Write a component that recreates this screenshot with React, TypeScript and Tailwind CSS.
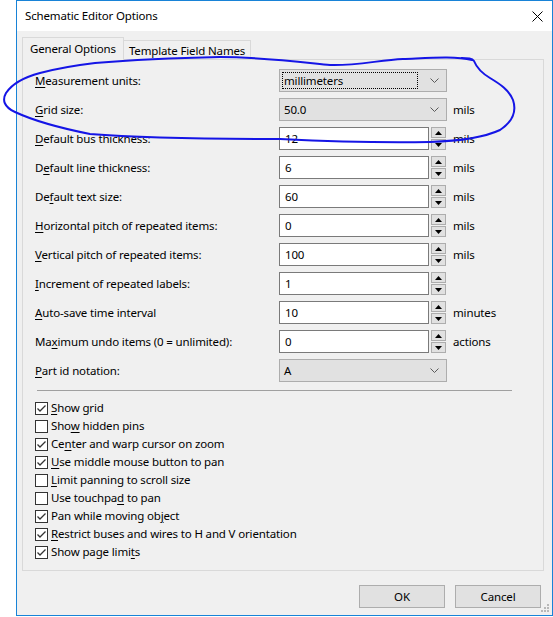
import React from 'react';

type Label = { pre: string; u: string; post: string };

type Row = {
  label: Label;
  kind: 'combo' | 'spin';
  value: string;
  unit?: string;
  focused?: boolean;
};

const rows: Row[] = [
  { label: { pre: '', u: 'M', post: 'easurement units:' }, kind: 'combo', value: 'millimeters', focused: true },
  { label: { pre: '', u: 'G', post: 'rid size:' }, kind: 'combo', value: '50.0', unit: 'mils' },
  { label: { pre: '', u: 'D', post: 'efault bus thickness:' }, kind: 'spin', value: '12', unit: 'mils' },
  { label: { pre: 'D', u: 'e', post: 'fault line thickness:' }, kind: 'spin', value: '6', unit: 'mils' },
  { label: { pre: 'De', u: 'f', post: 'ault text size:' }, kind: 'spin', value: '60', unit: 'mils' },
  { label: { pre: '', u: 'H', post: 'orizontal pitch of repeated items:' }, kind: 'spin', value: '0', unit: 'mils' },
  { label: { pre: '', u: 'V', post: 'ertical pitch of repeated items:' }, kind: 'spin', value: '100', unit: 'mils' },
  { label: { pre: '', u: 'I', post: 'ncrement of repeated labels:' }, kind: 'spin', value: '1' },
  { label: { pre: '', u: 'A', post: 'uto-save time interval' }, kind: 'spin', value: '10', unit: 'minutes' },
  { label: { pre: 'Ma', u: 'x', post: 'imum undo items (0 = unlimited):' }, kind: 'spin', value: '0', unit: 'actions' },
  { label: { pre: '', u: 'P', post: 'art id notation:' }, kind: 'combo', value: 'A' },
];

const checks: { label: Label; on: boolean }[] = [
  { label: { pre: '', u: 'S', post: 'how grid' }, on: true },
  { label: { pre: 'Sho', u: 'w', post: ' hidden pins' }, on: false },
  { label: { pre: 'Ce', u: 'n', post: 'ter and warp cursor on zoom' }, on: true },
  { label: { pre: '', u: 'U', post: 'se middle mouse button to pan' }, on: true },
  { label: { pre: '', u: 'L', post: 'imit panning to scroll size' }, on: false },
  { label: { pre: 'Use touchpa', u: 'd', post: ' to pan' }, on: false },
  { label: { pre: 'Pan while moving ob', u: 'j', post: 'ect' }, on: true },
  { label: { pre: '', u: 'R', post: 'estrict buses and wires to H and V orientation' }, on: true },
  { label: { pre: 'Show page limi', u: 't', post: 's' }, on: true },
];

function Mnemonic({ label }: { label: Label }) {
  return (
    <span className="whitespace-pre">
      {label.pre}
      <span className="underline underline-offset-2">{label.u}</span>
      {label.post}
    </span>
  );
}

function Chevron() {
  return (
    <svg width="9" height="5" viewBox="0 0 9 5" className="shrink-0">
      <polyline points="0.5,0.5 4.5,4.5 8.5,0.5" fill="none" stroke="#5a5a5a" strokeWidth="1" />
    </svg>
  );
}

function Combo({ value, focused }: { value: string; focused?: boolean }) {
  return (
    <div className="flex h-[23px] w-[168px] items-center border border-[#adadad] bg-[#e1e1e1] pr-[7px]">
      <div className="flex h-full flex-1 items-center p-[2px]">
        <div
          className={
            focused
              ? 'flex h-full flex-1 items-center border border-dotted border-black pl-[1px]'
              : 'flex h-full flex-1 items-center pl-[2px]'
          }
        >
          {value}
        </div>
      </div>
      <div className="ml-[10px]">
        <Chevron />
      </div>
    </div>
  );
}

function Arrow({ up }: { up?: boolean }) {
  return (
    <svg width="7" height="4" viewBox="0 0 7 4">
      <polygon points={up ? '0,4 7,4 3.5,0' : '0,0 7,0 3.5,4'} fill="#000" />
    </svg>
  );
}

function Spin({ value }: { value: string }) {
  return (
    <div className="flex h-[23px] w-[168px] items-stretch">
      <div className="flex w-[150px] items-center border border-[#7a7a7a] bg-white pl-[5px]">{value}</div>
      <div className="ml-[2px] flex w-[15px] flex-col gap-px">
        <div className="flex flex-1 items-center justify-center border border-[#adadad] bg-[#e1e1e1]">
          <Arrow up />
        </div>
        <div className="flex flex-1 items-center justify-center border border-[#adadad] bg-[#e1e1e1]">
          <Arrow />
        </div>
      </div>
    </div>
  );
}

function CheckBox({ on }: { on: boolean }) {
  return (
    <div className="flex h-[13px] w-[13px] items-center justify-center border border-[#333333] bg-white">
      {on && (
        <svg width="11" height="11" viewBox="0 0 11 11">
          <polyline points="1.5,5.5 4,8 9.5,2.5" fill="none" stroke="#333333" strokeWidth="1.3" />
        </svg>
      )}
    </div>
  );
}

export default function App() {
  return (
    <div className="relative h-[617px] w-[553px] overflow-hidden bg-white font-['Segoe_UI','Noto_Sans',sans-serif] text-[11.5px] leading-none tracking-[-0.15px] text-black">
      <div className="relative ml-[16px] flex h-[616px] w-[537px] flex-col border border-[#1883d7] bg-[#f0f0f0]">
        {/* Title bar */}
        <div className="flex h-[30px] items-center justify-between bg-white pl-[8px] pr-[9px]">
          <span>Schematic Editor Options</span>
          <svg width="11" height="11" viewBox="0 0 11 11">
            <line x1="0.5" y1="0.5" x2="10.5" y2="10.5" stroke="#000" strokeWidth="1" />
            <line x1="10.5" y1="0.5" x2="0.5" y2="10.5" stroke="#000" strokeWidth="1" />
          </svg>
        </div>

        {/* Tabs */}
        <div className="ml-[5px] mt-[6px] flex h-[22px] items-end">
          <div className="relative z-10 -mb-px flex h-[23px] items-center border-x border-t border-[#d9d9d9] bg-[#f0f0f0] px-[7px]">
            General Options
          </div>
          <div className="flex h-[19px] items-center border-r border-t border-[#d9d9d9] bg-[#f0f0f0] px-[5px] pt-[2px]">
            Template Field Names
          </div>
        </div>

        {/* Panel */}
        <div className="ml-[5px] flex h-[512px] w-[522px] flex-col border border-[#d9d9d9] bg-[#f0f0f0] pl-[12px] pt-[9px]">
          <div className="flex flex-col gap-[6px]">
            {rows.map((r, i) => (
              <div key={i} className="flex h-[23px] items-center">
                <div className="w-[244px]">
                  <Mnemonic label={r.label} />
                </div>
                {r.kind === 'combo' ? <Combo value={r.value} focused={r.focused} /> : <Spin value={r.value} />}
                {r.unit && <span className="ml-[6px]">{r.unit}</span>}
              </div>
            ))}
          </div>

          <div className="ml-[2px] mt-[8px] w-[475px] border-t border-[#a0a0a0]" />

          <div className="mt-[8px] flex flex-col">
            {checks.map((c, i) => (
              <div key={i} className="flex h-[18px] items-center gap-[3px]">
                <CheckBox on={c.on} />
                <Mnemonic label={c.label} />
              </div>
            ))}
          </div>
        </div>

        {/* Buttons */}
        <div className="mr-[11px] mt-[14px] flex justify-end gap-[10px]">
          <div className="flex h-[23px] w-[86px] items-center justify-center border border-[#adadad] bg-[#e1e1e1]">OK</div>
          <div className="flex h-[23px] w-[86px] items-center justify-center border border-[#adadad] bg-[#e1e1e1]">Cancel</div>
        </div>

        {/* Resize grip */}
        <svg width="9" height="9" viewBox="0 0 9 9" className="absolute bottom-[2px] right-[2px]">
          <rect x="6" y="0" width="2" height="2" fill="#b8b8b8" />
          <rect x="3" y="3" width="2" height="2" fill="#b8b8b8" />
          <rect x="6" y="3" width="2" height="2" fill="#b8b8b8" />
          <rect x="0" y="6" width="2" height="2" fill="#b8b8b8" />
          <rect x="3" y="6" width="2" height="2" fill="#b8b8b8" />
          <rect x="6" y="6" width="2" height="2" fill="#b8b8b8" />
        </svg>
      </div>

      {/* Hand-drawn annotation loop */}
      <svg width="553" height="617" viewBox="0 0 553 617" className="pointer-events-none absolute left-0 top-0">
        <path
          d="M 472 60 C 455 56, 430 58, 403 59 C 380 60, 355 66, 330 65 C 300 62, 260 57, 220 57 C 170 58, 130 60, 95 63 C 70 66, 55 69, 40 73 C 25 77, 12 84, 6 93 C 2 100, 4 107, 15 112 C 30 119, 55 127, 90 134 C 140 138, 220 139, 280 139 C 320 141, 380 143, 430 142 C 460 141, 485 137, 500 130 C 512 122, 517 112, 513 100 C 509 90, 500 84, 490 78 C 480 72, 476 66, 474 61 C 472 58, 468 58, 462 58"
          fill="none"
          stroke="#1515e6"
          strokeWidth="2"
          strokeLinecap="round"
          strokeLinejoin="round"
        />
      </svg>
    </div>
  );
}
